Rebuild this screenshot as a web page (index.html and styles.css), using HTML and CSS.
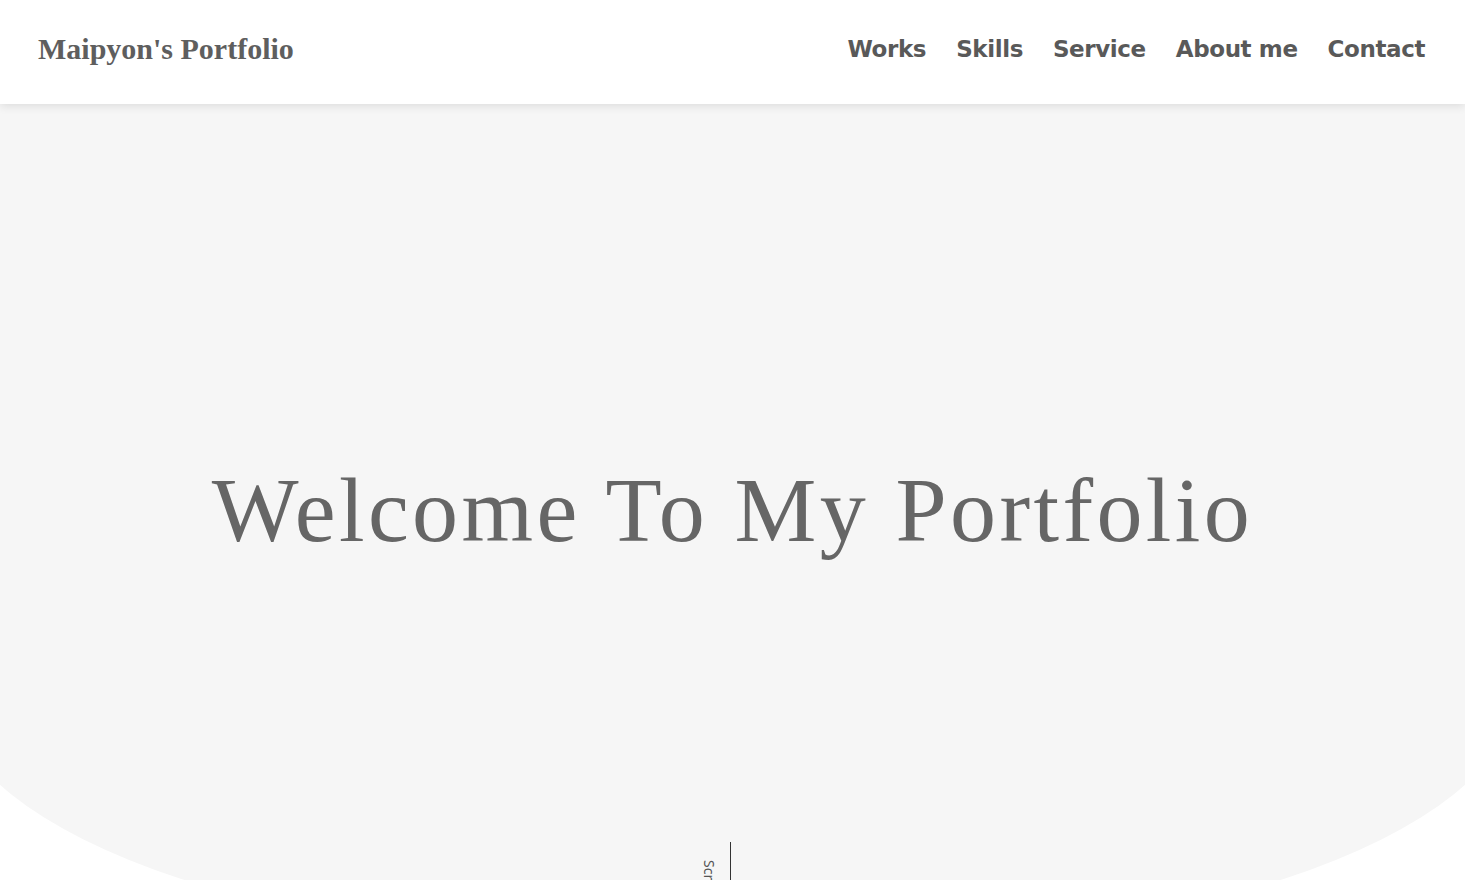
FILE: index.html
```html
<!DOCTYPE html>
<html lang="en">
<head>
<meta charset="utf-8">
<title>Maipyon's Portfolio</title>
<link rel="stylesheet" href="styles.css">
</head>
<body>
<header class="site-header">
  <a class="logo" href="#">Maipyon's Portfolio</a>
  <nav class="nav">
    <a href="#works">Works</a>
    <a href="#skills">Skills</a>
    <a href="#service">Service</a>
    <a href="#about">About me</a>
    <a href="#contact">Contact</a>
  </nav>
</header>
<main>
  <section class="hero">
    <div class="hero-inner">
      <h1 class="hero-title">Welcome To My Portfolio</h1>
    </div>
    <div class="scroll">
      <span class="scroll-text">Scroll</span>
      <span class="scroll-line"></span>
    </div>
  </section>
</main>
</body>
</html>
```

FILE: styles.css
```css
* { box-sizing: border-box; }
html, body { margin: 0; padding: 0; }
body {
  background: #fff;
  overflow-x: hidden;
  font-family: "DejaVu Sans", sans-serif;
  color: #666;
}
a { text-decoration: none; color: inherit; }

.site-header {
  position: relative;
  z-index: 10;
  height: 104px;
  background: #fff;
  display: flex;
  align-items: center;
  justify-content: space-between;
  padding: 0 40px 0 38px;
  box-shadow: 0 2px 9px rgba(0, 0, 0, 0.11);
}
.logo {
  font-family: "Liberation Serif", serif;
  font-weight: bold;
  font-size: 30px;
  color: #5e5e5e;
  letter-spacing: 0;
  margin-top: -6px;
}
.nav {
  display: flex;
  gap: 30px;
  margin-top: -7px;
}
.nav a {
  font-family: "DejaVu Sans", sans-serif;
  font-weight: bold;
  font-size: 23px;
  color: #595959;
  letter-spacing: -0.4px;
}

.hero {
  position: relative;
  height: 851px;
}
.hero::before {
  content: "";
  position: absolute;
  top: 0;
  bottom: 0;
  left: -48px;
  right: -48px;
  background: #f6f6f6;
  border-radius: 0 0 50% 50% / 0 0 260px 260px;
}
.hero-inner {
  position: relative;
  height: 812px;
  display: flex;
  align-items: center;
  justify-content: center;
}
.hero-title {
  margin: 0;
  font-family: "Liberation Serif", serif;
  font-weight: normal;
  font-size: 92px;
  line-height: 1;
  letter-spacing: 3.4px;
  color: #666;
}

.scroll {
  position: absolute;
  top: 738px;
  left: calc(50% - 30.5px);
  display: flex;
  align-items: flex-start;
  gap: 14px;
}
.scroll-text {
  writing-mode: vertical-rl;
  font-family: "Noto Sans", sans-serif;
  font-size: 14px;
  line-height: 14px;
  color: #555;
  margin-top: 18px;
}
.scroll-line {
  display: block;
  width: 1px;
  height: 110px;
  background: #333;
}
```
